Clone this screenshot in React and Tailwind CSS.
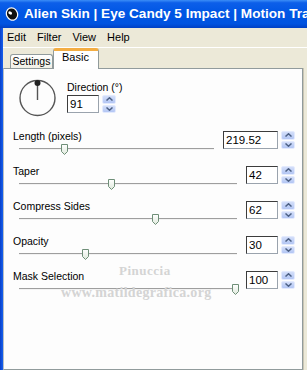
import React from 'react';

function Spinner() {
  return (
    <div className="ml-[3px] flex h-[18px] w-[14px] flex-col gap-px">
      {['up', 'down'].map((dir) => (
        <div
          key={dir}
          className="flex flex-1 items-center justify-center rounded-[2px] border border-[#e3eafd] bg-gradient-to-b from-[#d3def9] to-[#b3c6f4]"
        >
          <svg width="7" height="4" viewBox="0 0 7 4">
            <path
              d={dir === 'up' ? 'M0.5 3.5 L3.5 0.8 L6.5 3.5' : 'M0.5 0.5 L3.5 3.2 L6.5 0.5'}
              fill="none"
              stroke="#4d6185"
              strokeWidth="1.5"
            />
          </svg>
        </div>
      ))}
    </div>
  );
}

function NumBox({ value, width }) {
  return (
    <div className="flex items-start">
      <div
        className={`h-[18px] ${width} border border-t-[#3c3c3c] border-l-[#3c3c3c] border-r-[#9aa3ad] border-b-[#9aa3ad] bg-white pl-[2px] text-[11.5px] leading-[16px] text-black`}
      >
        {value}
      </div>
      <Spinner />
    </div>
  );
}

function Thumb() {
  return (
    <svg width="8" height="12" viewBox="0 0 8 12">
      <defs>
        <linearGradient id="thumbFill" x1="0" y1="0" x2="0" y2="1">
          <stop offset="0" stopColor="#ffffff" />
          <stop offset="1" stopColor="#dfe9dc" />
        </linearGradient>
      </defs>
      <path d="M0.5 0.5 H6.5 V7.5 L3.5 10.5 L0.5 7.5 Z" fill="url(#thumbFill)" stroke="#6f8f78" strokeWidth="1" />
    </svg>
  );
}

function SliderRow({ label, value, boxWidth, thumbLeft }) {
  return (
    <div className="flex h-[35px]">
      <div className="mr-[9px] flex-1">
        <div className="-mt-px h-[13px] leading-[13px]">{label}</div>
        <div className="relative h-[13px]">
          <div className="absolute left-[6px] right-0 top-[5px] h-[2px] border-t border-t-[#9e9e9e] border-b border-b-[#f2f2f2]" />
          <div className="absolute top-[1px]" style={{ left: thumbLeft }}>
            <Thumb />
          </div>
        </div>
      </div>
      <NumBox value={value} width={boxWidth} />
    </div>
  );
}

const rows = [
  { label: 'Length (pixels)', value: '219.52', boxWidth: 'w-[55px]', thumbLeft: 48 },
  { label: 'Taper', value: '42', boxWidth: 'w-[32px]', thumbLeft: 95 },
  { label: 'Compress Sides', value: '62', boxWidth: 'w-[32px]', thumbLeft: 139 },
  { label: 'Opacity', value: '30', boxWidth: 'w-[32px]', thumbLeft: 69 },
  { label: 'Mask Selection', value: '100', boxWidth: 'w-[32px]', thumbLeft: 219 },
];

export default function App() {
  return (
    <div className="flex h-[370px] w-[307px] flex-col overflow-hidden bg-[#ece9d8] font-['Liberation_Sans',Arial,sans-serif] text-[10.5px] text-black">
      {/* title bar */}
      <div className="flex h-[28px] shrink-0 items-center overflow-hidden bg-[linear-gradient(to_bottom,#3c8ef7_0%,#0d5fe9_10%,#0056e4_45%,#0053e0_85%,#0040c4_100%)] pl-[5px]">
        <svg width="14" height="14" viewBox="0 0 14 14" className="shrink-0">
          <ellipse cx="7" cy="7" rx="5.5" ry="6.3" transform="rotate(-25 7 7)" fill="#111" stroke="#fff" strokeWidth="1.2" />
          <ellipse cx="5.2" cy="6" rx="2" ry="1.4" transform="rotate(30 5.2 6)" fill="#fff" />
        </svg>
        <span className="ml-[5px] whitespace-nowrap text-[13.6px] font-bold text-white">
          Alien Skin | Eye Candy 5 Impact | Motion Trail
        </span>
      </div>

      <div className="flex min-h-0 flex-1">
        <div className="w-[3px] shrink-0 bg-[linear-gradient(to_right,#0a3fc8,#1560ee)]" />
        <div className="flex min-w-0 flex-1 flex-col">
          {/* menu */}
          <div className="flex h-[20px] shrink-0 items-center gap-[11px] border-b border-b-white pl-[4px] text-[11px]">
            <span>Edit</span>
            <span>Filter</span>
            <span>View</span>
            <span>Help</span>
          </div>

          {/* tabs */}
          <div className="relative z-10 flex h-[20px] shrink-0 items-end pl-[7px]">
            <div className="h-[14px] w-[43px] rounded-t-[3px] border border-b-0 border-[#919b9c] bg-gradient-to-b from-[#ffffff] to-[#f1efe6] text-center leading-[13px]">
              Settings
            </div>
            <div className="-mb-px h-[21px] w-[46px] rounded-t-[3px] border-x border-t-[3px] border-x-[#919b9c] border-t-[#f3ad43] bg-white pl-[8px] text-[11px] leading-[13px]">
              Basic
            </div>
          </div>

          {/* panel */}
          <div className="relative min-h-0 w-[300px] flex-1 border border-[#919b9c] border-l-[#b9bfc3] bg-[#fdfdfd] pl-[9px] pr-[7px] pt-[12px] shadow-[1px_0_0_#c9c5b4]">
            <div className="flex h-[37px]">
              <svg width="43" height="37" viewBox="0 0 43 37" className="ml-[3px] overflow-visible">
                <circle cx="21.5" cy="17" r="17.5" fill="none" stroke="#555" strokeWidth="1.4" />
                <line x1="21.5" y1="2" x2="21.5" y2="19" stroke="#555" strokeWidth="1.4" />
                <circle cx="21.5" cy="2" r="3" fill="#222" />
              </svg>
              <div className="ml-[8px] flex flex-col">
                <div className="h-[13px] leading-[13px]">Direction (°)</div>
                <div className="mt-px">
                  <NumBox value="91" width="w-[32px]" />
                </div>
              </div>
            </div>

            <div className="mt-[13px]">
              {rows.map((r) => (
                <SliderRow key={r.label} {...r} />
              ))}
            </div>

            {/* watermark */}
            <div className="pointer-events-none absolute left-[115px] top-[192px] font-['Liberation_Serif',serif] text-[13px] font-bold tracking-[0.5px] text-[#d4d4d4]">
              Pinuccia
            </div>
            <div className="pointer-events-none absolute left-[57px] top-[213px] font-['Liberation_Serif',serif] text-[14px] font-bold tracking-[0.3px] text-[#d4d4d4]">
              www.matildegrafica.org
            </div>
          </div>
        </div>
      </div>
    </div>
  );
}
